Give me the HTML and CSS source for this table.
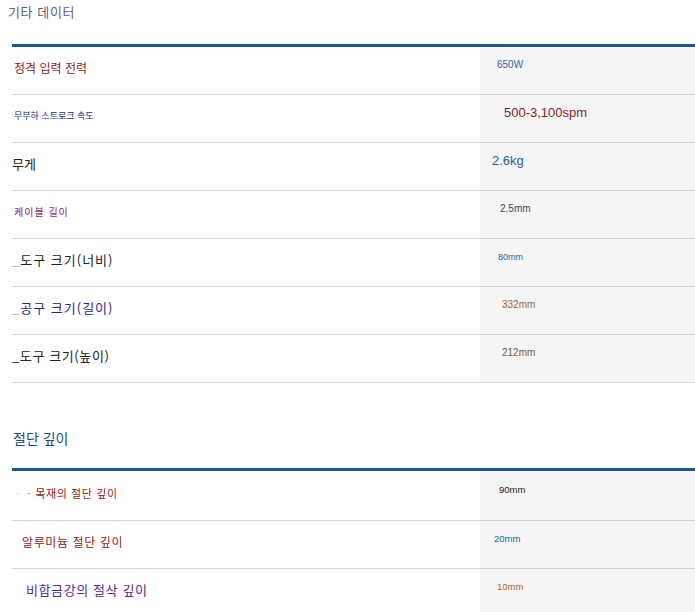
FILE: index.html
```html
<!DOCTYPE html>
<html lang="ko">
<head>
<meta charset="utf-8">
<link rel="stylesheet" href="styles.css">
</head>
<body>
<div class="page">
  <h2 class="title title-other">기타 데이터</h2>
  <div class="spec">
    <div class="row">
      <div class="label c-red s12">정격 입력 전력</div>
      <div class="value c-blue2 v10 pl17">650W</div>
    </div>
    <div class="row">
      <div class="label c-navy s9">무부하 스트로크 속도</div>
      <div class="value c-red v13 pl24">500-3,100spm</div>
    </div>
    <div class="row">
      <div class="label c-dark s13 pl0">무게</div>
      <div class="value c-blue v13 pl12">2.6kg</div>
    </div>
    <div class="row">
      <div class="label c-mag s10 ls">케이블 길이</div>
      <div class="value c-steel v10 pl20">2.5mm</div>
    </div>
    <div class="row">
      <div class="label c-dark s13 pl0 ls"><span class="us-light">_</span>도구 크기(너비)</div>
      <div class="value c-blue v9 pl18">80mm</div>
    </div>
    <div class="row">
      <div class="label c-navy s13 pl0 ls"><span class="us-light">_</span>공구 크기(길이)</div>
      <div class="value c-brown v10 pl22">332mm</div>
    </div>
    <div class="row">
      <div class="label c-dark s13 pl0 ls-s">_도구 크기(높이)</div>
      <div class="value c-brown2 v10 pl22">212mm</div>
    </div>
  </div>

  <h2 class="title title-cut">절단 깊이</h2>
  <div class="spec">
    <div class="row row-first">
      <div class="label c-red s11 pl0 ls-s"><span class="us-light">‐</span>‐목재의 절단 깊이</div>
      <div class="value c-dark v95 pl19">90mm</div>
    </div>
    <div class="row">
      <div class="label c-red s12 pl10 ls-s">알루미늄 절단 깊이</div>
      <div class="value c-blue v95 pl14">20mm</div>
    </div>
    <div class="row">
      <div class="label c-purple s13 pl14 ls-s">비합금강의 절삭 깊이</div>
      <div class="value c-orange v95 pl17">10mm</div>
    </div>
  </div>
</div>
</body>
</html>
```

FILE: styles.css
```css
html, body {
  margin: 0;
  padding: 0;
  background: #ffffff;
  overflow: hidden;
}

body {
  font-family: "Noto Sans CJK KR", "Noto Sans", sans-serif;
}

.page {
  padding-left: 8px;
}

.title {
  margin: 0;
  font-weight: normal;
}

.title-other {
  padding-top: 3px;
  font-size: 13px;
  line-height: 18px;
  letter-spacing: 0.6px;
  color: #6e5a78;
}

.title-cut {
  margin-top: 45px;
  margin-left: 5px;
  font-size: 14px;
  line-height: 20px;
  color: #1d4b78;
}

.spec {
  margin-left: 4px;
  border-top: 3px solid #1a5a8c;
}

.title-other + .spec {
  margin-top: 23px;
}

.title-cut + .spec {
  margin-top: 20px;
}

.row {
  display: grid;
  grid-template-columns: 468px 1fr;
  height: 47px;
  border-bottom: 1px solid #d4d4d4;
}

.row-first {
  height: 49px;
}

.label {
  display: flex;
  align-items: center;
  padding-left: 2px;
  padding-bottom: 6px;
  line-height: 18px;
}

.value {
  display: flex;
  align-items: center;
  padding-bottom: 11px;
  background: #f4f5f5;
  font-family: "Liberation Sans", Arial, sans-serif;
  line-height: 16px;
}

.ls { letter-spacing: 1px; }
.ls-s { letter-spacing: 0.6px; }

.pl0 { padding-left: 0; }
.pl10 { padding-left: 10px; }
.pl12 { padding-left: 12px; }
.pl14 { padding-left: 14px; }
.pl17 { padding-left: 17px; }
.pl18 { padding-left: 18px; }
.pl19 { padding-left: 19px; }
.pl20 { padding-left: 20px; }
.pl22 { padding-left: 22px; }
.pl24 { padding-left: 24px; }

.s9 { font-size: 9px; }
.s10 { font-size: 10px; }
.s11 { font-size: 11px; }
.s12 { font-size: 12px; }
.s13 { font-size: 13px; }

.v9 { font-size: 9px; }
.v95 { font-size: 9.5px; }
.v10 { font-size: 10px; }
.v13 { font-size: 13px; }

.us-light {
  color: #b0b0b0;
}

.c-red { color: #8b1c1c; }
.c-navy { color: #27287e; }
.c-dark { color: #222222; }
.c-mag { color: #86286a; }
.c-purple { color: #5b2a8c; }
.c-blue { color: #2a62a0; }
.c-blue2 { color: #3d5fa8; }
.c-steel { color: #2c4c7c; }
.c-brown { color: #a8643a; }
.c-brown2 { color: #8c5432; }
.c-orange { color: #a8661e; }
```
